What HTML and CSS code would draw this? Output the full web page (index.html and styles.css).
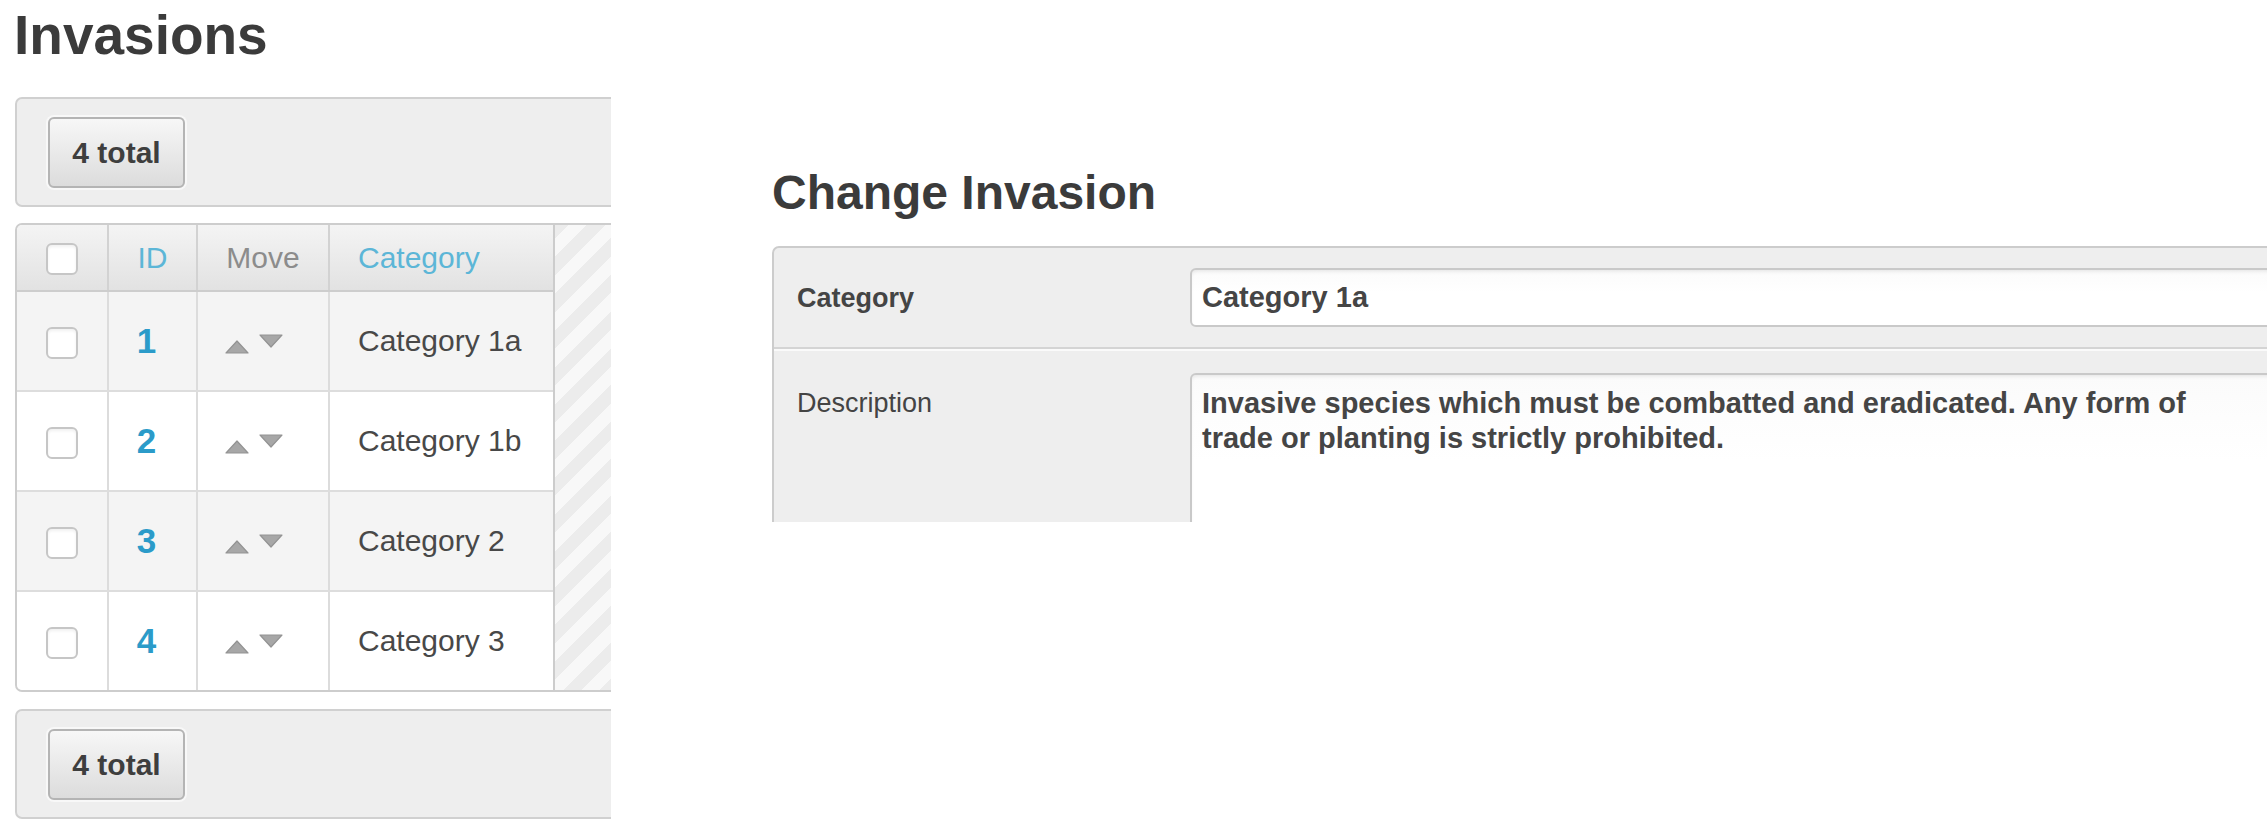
FILE: index.html
```html
<!DOCTYPE html>
<html lang="en">
<head>
<meta charset="utf-8">
<title>Invasions</title>
<link rel="stylesheet" href="styles.css">
</head>
<body>
<div class="page">
  <section class="list-panel">
    <h1 class="list-title">Invasions</h1>
    <div class="toolbar"><button class="count-btn" type="button">4 total</button></div>
    <div class="grid-wrap">
      <div class="grid">
        <div class="grid-row head">
          <div class="cell c-check"><span class="checkbox"></span></div>
          <div class="cell c-id"><span class="sort-link">ID</span></div>
          <div class="cell c-move"><span class="muted">Move</span></div>
          <div class="cell c-cat"><span class="sort-link">Category</span></div>
        </div>
        <div class="grid-row odd">
          <div class="cell c-check"><span class="checkbox"></span></div>
          <div class="cell c-id"><a class="id-link">1</a></div>
          <div class="cell c-move"><svg class="arrows" width="58" height="20" viewBox="0 0 58 20"><polygon points="1,19 12,7 23,19" /><polygon points="35,1 57,1 46,13" /></svg></div>
          <div class="cell c-cat">Category 1a</div>
        </div>
        <div class="grid-row">
          <div class="cell c-check"><span class="checkbox"></span></div>
          <div class="cell c-id"><a class="id-link">2</a></div>
          <div class="cell c-move"><svg class="arrows" width="58" height="20" viewBox="0 0 58 20"><polygon points="1,19 12,7 23,19" /><polygon points="35,1 57,1 46,13" /></svg></div>
          <div class="cell c-cat">Category 1b</div>
        </div>
        <div class="grid-row odd">
          <div class="cell c-check"><span class="checkbox"></span></div>
          <div class="cell c-id"><a class="id-link">3</a></div>
          <div class="cell c-move"><svg class="arrows" width="58" height="20" viewBox="0 0 58 20"><polygon points="1,19 12,7 23,19" /><polygon points="35,1 57,1 46,13" /></svg></div>
          <div class="cell c-cat">Category 2</div>
        </div>
        <div class="grid-row last">
          <div class="cell c-check"><span class="checkbox"></span></div>
          <div class="cell c-id"><a class="id-link">4</a></div>
          <div class="cell c-move"><svg class="arrows" width="58" height="20" viewBox="0 0 58 20"><polygon points="1,19 12,7 23,19" /><polygon points="35,1 57,1 46,13" /></svg></div>
          <div class="cell c-cat">Category 3</div>
        </div>
      </div>
    </div>
    <div class="toolbar bottom"><button class="count-btn" type="button">4 total</button></div>
  </section>

  <section class="form-panel">
    <h2 class="form-title">Change Invasion</h2>
    <form class="form-box">
      <div class="form-row">
        <label class="form-label strong" for="f-cat">Category</label>
        <div class="field"><input id="f-cat" class="text-input" type="text" value="Category 1a"></div>
      </div>
      <div class="form-row">
        <label class="form-label" for="f-desc">Description</label>
        <div class="field"><textarea id="f-desc" class="text-area">Invasive species which must be combatted and eradicated. Any form of
trade or planting is strictly prohibited.</textarea></div>
      </div>
    </form>
  </section>
</div>
</body>
</html>
```

FILE: styles.css
```css
html, body {
  margin: 0;
  padding: 0;
  background: #ffffff;
  overflow: hidden;
}

body {
  width: 2267px;
  height: 819px;
  font-family: "Liberation Sans", Arial, Helvetica, sans-serif;
  color: #444444;
}

.page {
  display: flex;
  align-items: flex-start;
  gap: 161px;
  height: 819px;
}

/* ---------- left: list ---------- */
.list-panel {
  flex: 0 0 611px;
  width: 611px;
  height: 819px;
  overflow: hidden;
  padding-left: 15px;
  box-sizing: border-box;
}

.list-title {
  margin: 8px 0 34px -1px;
  font-size: 55px;
  line-height: 55px;
  font-weight: bold;
  color: #3b3b3b;
}

.toolbar {
  width: 700px;
  height: 110px;
  box-sizing: border-box;
  border: 2px solid #d0d0d0;
  border-radius: 7px;
  background: #eeeeee;
  padding: 18px 0 0 31px;
}

.toolbar.bottom {
  margin-top: 17px;
}

.count-btn {
  display: block;
  width: 137px;
  height: 71px;
  box-sizing: border-box;
  border: 2px solid #b4b4b4;
  border-radius: 6px;
  background: linear-gradient(#f7f7f7, #dcdcdc);
  box-shadow: 0 0 0 2px #f8f8f8;
  font-family: inherit;
  font-size: 30px;
  font-weight: bold;
  color: #3e3e3e;
  padding: 0;
}

.grid-wrap {
  margin-top: 16px;
  width: 700px;
  box-sizing: border-box;
  border: 2px solid #cdcdcd;
  border-radius: 7px;
  overflow: hidden;
  background: repeating-linear-gradient(135deg, #f8f8f8 0 13px, #ececec 13px 26px);
}

.grid {
  width: 538px;
  box-sizing: border-box;
  border-right: 2px solid #cccccc;
}

.grid-row {
  display: grid;
  grid-template-columns: 90px 89px 132px 225px;
  height: 100px;
  box-sizing: border-box;
  border-bottom: 2px solid #dddddd;
  background: #ffffff;
}

.grid-row.odd {
  background: #f4f4f4;
}

.grid-row.last {
  height: 98px;
  border-bottom: 0;
}

.grid-row.head {
  height: 67px;
  background: linear-gradient(#f4f4f4, #e2e2e2);
  border-bottom: 2px solid #cdcdcd;
}

.cell {
  display: flex;
  align-items: center;
  justify-content: center;
  box-sizing: border-box;
  font-size: 30px;
  color: #484848;
}

.cell + .cell {
  border-left: 2px solid #dcdcdc;
}

.head .cell + .cell {
  border-left-color: #d2d2d2;
}

.c-cat {
  justify-content: flex-start;
  padding-left: 28px;
}

.c-move {
  padding-right: 18px;
}

.grid-row:not(.head) .c-id {
  padding-right: 12px;
}

.head .c-move {
  padding-right: 0;
}

.checkbox {
  display: block;
  width: 32px;
  height: 32px;
  box-sizing: border-box;
  border: 2px solid #c6c6c6;
  border-radius: 6px;
  background: #ffffff;
  box-shadow: inset 0 2px 3px rgba(0, 0, 0, 0.06);
  margin-top: 2px;
}

.grid-row:not(.head) .checkbox {
  margin-top: 4px;
}

.sort-link {
  color: #5cb6d7;
}

.muted {
  color: #8c8c8c;
}

.id-link {
  color: #2b9bc9;
  font-weight: bold;
  font-size: 35px;
  text-decoration: none;
}

.arrows {
  display: block;
  margin-top: 5px;
}

.arrows polygon {
  fill: #a7a7a7;
  stroke: #939393;
  stroke-width: 1.2;
  stroke-linejoin: round;
}

/* ---------- right: form ---------- */
.form-panel {
  flex: 1 1 auto;
  min-width: 0;
  height: 522px;
  overflow: hidden;
}

.form-title {
  margin: 169px 0 29px 0;
  font-size: 48px;
  line-height: 48px;
  font-weight: bold;
  color: #3b3b3b;
}

.form-box {
  width: 1700px;
  margin: 0;
  box-sizing: border-box;
  border: 2px solid #cccccc;
  border-radius: 7px;
  background: #eeeeee;
}

.form-row {
  display: grid;
  grid-template-columns: 416px 1fr;
  padding: 20px 0;
}

.form-row + .form-row {
  border-top: 2px solid #d4d4d4;
  box-shadow: inset 0 2px 0 #fafafa;
  padding-top: 24px;
  padding-bottom: 60px;
}

.form-label {
  padding: 14px 0 0 23px;
  font-size: 27px;
  line-height: 32px;
  color: #444444;
}

.form-label.strong {
  font-weight: bold;
}

.text-input,
.text-area {
  display: block;
  width: 1250px;
  box-sizing: border-box;
  border: 2px solid #c9c9c9;
  border-radius: 6px;
  background: linear-gradient(#fbfbfb, #ffffff 40%);
  box-shadow: inset 0 3px 4px -2px rgba(0, 0, 0, 0.1);
  font-family: inherit;
  font-size: 29px;
  font-weight: bold;
  color: #454545;
  margin: 0;
  outline: none;
}

.text-input {
  height: 59px;
  padding: 0 10px;
}

.text-area {
  height: 220px;
  padding: 11px 10px;
  line-height: 35px;
  resize: none;
  overflow: hidden;
}
```
